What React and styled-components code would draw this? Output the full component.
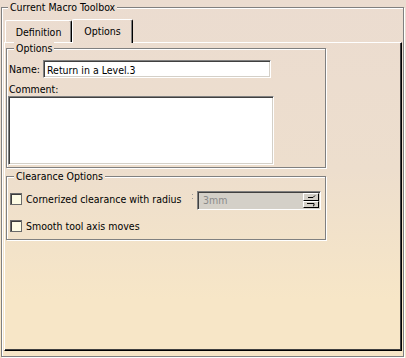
import * as React from "react";
import styled, { createGlobalStyle } from "styled-components";

const pageBg =
  "linear-gradient(180deg, #ebdcd0 0px, #eddecd 170px, #f3e3c9 250px, #f7e6c7 300px, #f7e6c7 358px) fixed";

const uiFont = `"DejaVu Sans Condensed", "Liberation Sans", Arial, sans-serif`;

const GlobalStyle = createGlobalStyle`
  html, body {
    margin: 0;
    padding: 0;
  }
  body {
    background: ${pageBg};
    font-family: ${uiFont};
    font-size: 10.5px;
    color: #000;
  }
`;

const App = () => {
  return (
    <>
      <GlobalStyle />
      <Window>
        <OuterGroup>
          <Legend>Current Macro Toolbox</Legend>
          <TabStrip>
            <Tab $width={67}>Definition</Tab>
            <Tab $width={61} $active>
              Options
            </Tab>
          </TabStrip>
          <Panel>
            <Group $height={120}>
              <Legend>Options</Legend>
              <NameRow>
                <FieldLabel>Name:</FieldLabel>
                <TextInput defaultValue="Return in a Level.3" />
              </NameRow>
              <CommentLabel>Comment:</CommentLabel>
              <CommentBox />
            </Group>
            <Group $height={64} $gapTop={8}>
              <Legend>Clearance Options</Legend>
              <CheckRow $top={8}>
                <CheckBox />
                <CheckText>Cornerized clearance with radius</CheckText>
                <Grip />
                <SpinField>
                  <SpinValue>3mm</SpinValue>
                  <SpinButtons>
                    <SpinButton>
                      <svg width="14" height="5" viewBox="0 0 14 5">
                        <path d="M4 3.5 H9 L11 1.5" stroke="#000" fill="none" strokeWidth="1" />
                      </svg>
                    </SpinButton>
                    <SpinButton>
                      <svg width="14" height="5" viewBox="0 0 14 5">
                        <path d="M3 1.5 H10 L10 3.5 L9 4" stroke="#000" fill="none" strokeWidth="1" />
                      </svg>
                    </SpinButton>
                  </SpinButtons>
                </SpinField>
              </CheckRow>
              <CheckRow $top={8}>
                <CheckBox />
                <CheckText>Smooth tool axis moves</CheckText>
              </CheckRow>
            </Group>
          </Panel>
        </OuterGroup>
      </Window>
    </>
  );
};

const Window = styled.div`
  width: 406px;
  height: 358px;
  box-sizing: border-box;
  padding: 7px 2px 1px 1px;
  overflow: hidden;
`;

const OuterGroup = styled.div`
  height: 350px;
  box-sizing: border-box;
  border: 1px solid #808080;
  box-shadow: inset 1px 1px 0 #fff, 1px 1px 0 #fff;
  display: flex;
  flex-direction: column;
`;

const Legend = styled.div`
  align-self: flex-start;
  margin: -8px 0 0 6px;
  padding: 0 2px;
  height: 14px;
  line-height: 14px;
  background: ${pageBg};
  white-space: nowrap;
`;

const TabStrip = styled.div`
  display: flex;
  align-items: flex-end;
  height: 23px;
  margin-top: 5px;
  padding-left: 3px;
`;

const Tab = styled.div`
  width: ${(p) => p.$width}px;
  height: ${(p) => (p.$active ? 24 : 22)}px;
  margin-bottom: ${(p) => (p.$active ? -1 : 0)}px;
  position: relative;
  z-index: ${(p) => (p.$active ? 1 : 0)};
  box-sizing: border-box;
  border-top: 1px solid #fff;
  border-left: 1px solid #fff;
  border-right: 1px solid #000;
  border-radius: 2px 2px 0 0;
  box-shadow: inset -1px 0 0 #808080;
  background: ${pageBg};
  display: flex;
  align-items: center;
  justify-content: center;
  padding-bottom: ${(p) => (p.$active ? 2 : 0)}px;
`;

const Panel = styled.div`
  flex: 1;
  margin: 0 1px 5px 2px;
  box-sizing: border-box;
  border-top: 1px solid #fff;
  border-left: 1px solid #fff;
  border-right: 1px solid #000;
  border-bottom: 1px solid #000;
  box-shadow: inset -1px -1px 0 #404040;
  padding: 5px 0 0 1px;
  display: flex;
  flex-direction: column;
`;

const Group = styled.div`
  width: 320px;
  height: ${(p) => p.$height}px;
  margin-top: ${(p) => p.$gapTop || 0}px;
  box-sizing: border-box;
  border: 1px solid #808080;
  box-shadow: inset 1px 1px 0 #fff, 1px 1px 0 #fff;
  padding: 0 1px;
  display: flex;
  flex-direction: column;
`;

const NameRow = styled.div`
  display: flex;
  align-items: center;
  margin-top: 5px;
  padding-left: 1px;
  height: 18px;
`;

const FieldLabel = styled.span`
  width: 34px;
  line-height: 14px;
`;

const sunken = `
  box-sizing: border-box;
  border-style: solid;
  border-width: 1px;
  border-color: #808080 #fff #fff #808080;
  box-shadow: inset 1px 1px 0 #404040, inset -1px -1px 0 #d4d0c8;
`;

const TextInput = styled.input`
  ${sunken}
  width: 228px;
  height: 18px;
  margin: 0;
  padding: 1px 0 0 3px;
  background: #fff;
  font-family: ${uiFont};
  font-size: 10.5px;
  color: #000;
  outline: none;
`;

const CommentLabel = styled.div`
  margin-top: 4px;
  padding-left: 1px;
  height: 14px;
  line-height: 14px;
`;

const CommentBox = styled.textarea`
  ${sunken}
  display: block;
  width: 266px;
  height: 69px;
  margin: 0;
  padding: 2px;
  resize: none;
  background: #fff;
  font-family: ${uiFont};
  font-size: 10.5px;
  outline: none;
`;

const CheckRow = styled.div`
  display: flex;
  align-items: flex-start;
  margin-top: ${(p) => p.$top}px;
  padding-left: 2px;
`;

const CheckBox = styled.span`
  width: 12px;
  height: 12px;
  margin-top: 2px;
  box-sizing: border-box;
  border: 1px solid #6b6b6b;
  box-shadow: inset 1px 1px 0 #3c3c3c;
  background: #fdfbe4;
  flex-shrink: 0;
`;

const CheckText = styled.span`
  margin: 1px 0 0 4px;
  line-height: 14px;
  white-space: nowrap;
`;

const Grip = styled.span`
  width: 1px;
  height: 6px;
  margin: 3px 4px 0 auto;
  background: linear-gradient(#9a9a9a 0 1px, transparent 1px 4px, #9a9a9a 4px 5px, transparent 5px);
`;

const SpinField = styled.div`
  ${sunken}
  width: 124px;
  height: 19px;
  margin-right: 3px;
  display: flex;
  background: #d4d0c8;
  padding: 1px 1px 1px 2px;
`;

const SpinValue = styled.span`
  flex: 1;
  line-height: 15px;
  padding-left: 3px;
  color: #8a8a8a;
`;

const SpinButtons = styled.div`
  width: 16px;
  display: flex;
  flex-direction: column;
`;

const SpinButton = styled.div`
  flex: 1;
  box-sizing: border-box;
  border-style: solid;
  border-width: 1px;
  border-color: #fff #000 #000 #fff;
  background: #d4d0c8;
  display: flex;
  align-items: center;
  justify-content: center;
  overflow: hidden;
`;

export default App;
